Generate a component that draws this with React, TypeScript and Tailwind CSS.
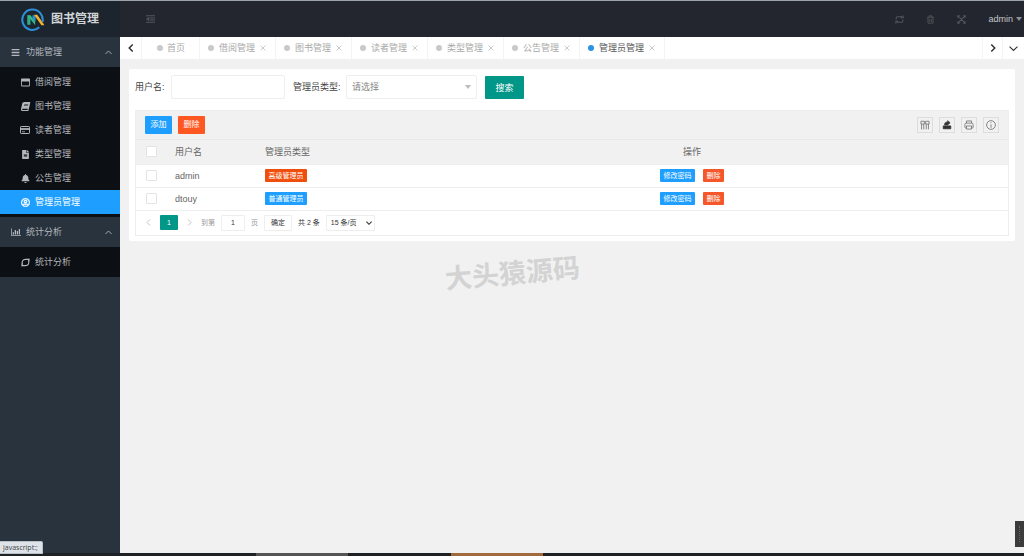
import { FaBars, FaBell, FaBook, FaFileAlt, FaRegUserCircle, FaRegWindowMaximize } from "react-icons/fa";
import type { ReactNode } from "react";

const manageItems: [string, ReactNode][] = [
  ["借阅管理", <FaRegWindowMaximize key="i" />],
  ["图书管理", <FaBook key="i" className="-skew-x-12" />],
  ["读者管理", <CardIcon key="i" />],
  ["类型管理", <FaFileAlt key="i" />],
  ["公告管理", <FaBell key="i" />],
  ["管理员管理", <UserIcon key="i" />],
];

const tabs = ["借阅管理", "图书管理", "读者管理", "类型管理", "公告管理", "管理员管理"];

const rows = [
  { name: "admin", type: "高级管理员", color: "bg-[#f04e0c]" },
  { name: "dtouy", type: "普通管理员", color: "bg-[#1e9fff]" },
];

const current = "管理员管理";

export default function App() {
  return (
    <div className="flex min-h-screen flex-col bg-[#f1f1f1] font-['Liberation_Sans','Noto_Sans_CJK_SC',sans-serif] text-[9px] leading-3 text-[#666]">
      <div className="flex flex-1">
        <Sidebar />
        <div className="flex min-w-0 flex-1 flex-col">
          <TopBar />
          <TabBar />
          <main className="relative flex-1 px-[9px] pt-[10px]">
            <section className="rounded-xs bg-white px-[6px] pt-[6px] pb-[5px]">
              <SearchForm />
              <AdminTable />
            </section>
            <p
              aria-hidden="true"
              className="pointer-events-none absolute top-[199px] left-[36%] -rotate-5 text-[27px] leading-8 font-bold whitespace-nowrap text-[#d3d3d3]"
            >
              大头猿源码
            </p>
          </main>
        </div>
      </div>
      <div className="flex h-[3px] bg-[#1f2224]">
        <span className="w-1/4" />
        <span className="w-[9%] bg-[#555]" />
        <span className="w-[10%]" />
        <span className="w-[9%] bg-[#a06a3c]" />
      </div>
      <div className="fixed bottom-[2px] left-0 rounded-tr-xs border border-l-0 border-[#b9bfc6] bg-[#dee3ea] pr-1 pl-[3px] font-['Open_Sans',sans-serif] text-[7px] leading-[11px] text-[#444]">
        javascript:;
      </div>
      <div className="fixed right-0 bottom-[9px] flex h-[26px] w-[9px] items-center justify-center bg-[#3c3c3c]">
        <span className="h-4 border-l border-dotted border-[#666]" />
      </div>
    </div>
  );
}

function Sidebar() {
  return (
    <aside className="w-[120px] shrink-0 border-t border-[#9aa3ab] bg-[#28333e]">
      <div className="flex h-9 items-center gap-[7px] bg-[#1c242d] pl-[21px] text-[#d2d5d8]">
        <Logo />
        <h1 className="text-[12px] font-bold">图书管理</h1>
      </div>
      <MenuGroup title="功能管理" icon={<FaBars />} items={manageItems} />
      <MenuGroup title="统计分析" icon={<ChartIcon />} items={[["统计分析", <LoopIcon key="i" />]]} />
    </aside>
  );
}

function MenuGroup({ title, icon, items }: { title: string; icon: ReactNode; items: [string, ReactNode][] }) {
  return (
    <nav aria-label={title}>
      <button className="flex h-[30px] w-full items-center bg-[#28333e] pr-2 pl-[11px] text-[#b4b9be]">
        <span className="mr-[6px] flex w-[9px] justify-center">{icon}</span>
        {title}
        <Chevron className="ml-auto h-[7px] w-[7px] rotate-180" />
      </button>
      <ul className="bg-[#0c0f14] py-[3px]">
        {items.map(([label, itemIcon]) => (
          <li key={label}>
            <a
              href="#"
              className={
                label === current
                  ? "flex h-6 items-center bg-[#1e9fff] pl-5 text-white"
                  : "flex h-6 items-center pl-5 text-[#b4b7ba]"
              }
            >
              <span className="mr-[5px] flex w-[10px] justify-center">{itemIcon}</span>
              {label}
            </a>
          </li>
        ))}
      </ul>
    </nav>
  );
}

function TopBar() {
  return (
    <header className="flex h-[37px] items-center border-t border-[#9aa3ab] bg-[#23262e] pr-[2px] pl-[26px] text-[#53565c]">
      <button aria-label="收起菜单">
        <svg viewBox="0 0 18 16" className="h-2 w-[9px]" fill="none" stroke="currentColor" strokeWidth="2">
          <path d="M0 1.500h18M7 6h11M7 10h11M0 14.500h18M5 5L1 8l4 3z" />
        </svg>
      </button>
      <div className="ml-auto flex items-center gap-[22px]">
        <button aria-label="刷新">
          <svg viewBox="0 0 16 16" className="h-[9px] w-[9px]" fill="none" stroke="currentColor" strokeWidth="1.8">
            <path d="M2 8V5.500Q2 3 4.500 3H13M14.500 1v4h-4M14 8v2.500q0 2.500-2.500 2.500H3M1.500 15v-4h4" />
          </svg>
        </button>
        <button aria-label="清理">
          <svg viewBox="0 0 16 16" className="h-[9px] w-[9px]" fill="none" stroke="currentColor" strokeWidth="1.6">
            <path d="M2 4h12M5.500 4V1.500h5V4M3.500 4v10.500h9V4M6.500 7v5M9.500 7v5" />
          </svg>
        </button>
        <button aria-label="全屏">
          <svg viewBox="0 0 16 16" className="h-[9px] w-[9px]" fill="none" stroke="currentColor" strokeWidth="1.8">
            <path d="M1.500 5v-3.500h3.500M11 1.500h3.500V5M14.500 11v3.500H11M5 14.500H1.500V11M2 2l12 12M14 2L2 14" />
          </svg>
        </button>
        <button className="flex items-center gap-[3px] text-[#c4c6c9]">
          admin
          <span className="border-x-[3px] border-t-4 border-x-transparent border-t-[#8d9096]" />
        </button>
      </div>
    </header>
  );
}

function TabBar() {
  return (
    <div className="flex h-[22px] items-stretch bg-white text-[#aaa]">
      <button aria-label="上一个" className="flex w-[22px] items-center justify-center border-r border-[#f4f4f4] text-[#333]">
        <Chevron className="h-2 w-2 rotate-90 stroke-[3px]" />
      </button>
      <a href="#" className="flex items-center gap-1 border-r border-[#f4f4f4] pr-[14px] pl-[15px]">
        <span className="size-[6px] rounded-full bg-[#c9c9c9]" />
        首页
      </a>
      {tabs.map((tab) => (
        <div key={tab} className="flex items-center gap-[5px] border-r border-[#f4f4f4] pr-[9px] pl-[8px]">
          <span className={tab === current ? "size-[6px] rounded-full bg-[#2b93e2]" : "size-[6px] rounded-full bg-[#c9c9c9]"} />
          <a href="#" className={tab === current ? "text-[#555]" : ""}>
            {tab}
          </a>
          <button aria-label={`关闭${tab}`}>
            <svg viewBox="0 0 10 10" className="size-[6px]" fill="none" stroke="#c4c4c4" strokeWidth="1.5">
              <path d="M1 1l8 8M9 1l-8 8" />
            </svg>
          </button>
        </div>
      ))}
      <button aria-label="下一个" className="ml-auto flex w-[21px] items-center justify-center border-x border-[#f4f4f4] text-[#333]">
        <Chevron className="h-2 w-2 -rotate-90 stroke-[3px]" />
      </button>
      <button aria-label="更多" className="flex w-[21px] items-center justify-center text-[#333]">
        <Chevron className="h-[9px] w-[9px]" />
      </button>
    </div>
  );
}

function SearchForm() {
  return (
    <form className="flex h-[35px] items-start text-[#444]" onSubmit={(e) => e.preventDefault()}>
      <label htmlFor="username" className="mr-1 w-8 leading-6">
        用户名:
      </label>
      <input id="username" className="mr-2 h-6 w-[114px] rounded-xs border border-[#eee] px-[5px] outline-none" />
      <label htmlFor="role" className="mr-[5px] w-12 leading-6">
        管理员类型:
      </label>
      <div className="relative mr-2 w-[131px]">
        <select id="role" className="h-6 w-full appearance-none rounded-xs border border-[#eee] bg-white px-[5px] text-[#888]">
          <option>请选择</option>
          <option>高级管理员</option>
          <option>普通管理员</option>
        </select>
        <span className="pointer-events-none absolute top-[10px] right-[6px] border-x-[3px] border-t-4 border-x-transparent border-t-[#bbb]" />
      </div>
      <button className="mt-px h-[23px] w-[39px] rounded-[1px] bg-[#009688] text-white">搜索</button>
    </form>
  );
}

function AdminTable() {
  return (
    <div className="border border-[#eee]">
      <div className="flex h-[29px] items-center gap-[6px] border-b border-[#e8e8e8] bg-[#f1f1f1] px-[9px] text-[8px] text-white">
        <button className="h-[18px] w-[27px] rounded-[1px] bg-[#1e9fff]">添加</button>
        <button className="h-[18px] w-[27px] rounded-[1px] bg-[#ff5722]">删除</button>
        <div className="ml-auto flex gap-[6px] text-[#777]">
          <ToolButton label="筛选列">
            <path d="M1.500 2h5.500v4.500H1.500zM9 2h5.500v4.500H9zM2.500 6.500V15M6 6.500V15M10 6.500V15M13.500 6.500V15" />
          </ToolButton>
          <ToolButton label="导出">
            <path d="M2 9.500h12v4.500H2z" fill="#333" stroke="#333" />
            <path d="M4 8c0-4 2-5 5-5V1l4 3.500L9 8z" fill="#333" stroke="#333" strokeWidth="1" />
          </ToolButton>
          <ToolButton label="打印">
            <path d="M4 5V1.500h8V5M4 13H3Q1.500 13 1.500 11.500V7Q1.500 5 3.500 5h9q2 0 2 2v4.500q0 1.500-1.500 1.500h-1M4 9.500h8v5H4z" />
          </ToolButton>
          <ToolButton label="提示">
            <circle cx="8" cy="8" r="7" />
            <path d="M8 3.500v1.500M8 7v5.500" />
          </ToolButton>
        </div>
      </div>
      <table className="w-full table-fixed border-collapse text-left">
        <thead className="bg-[#f1f1f1]">
          <tr className="h-6 border-b border-[#eee]">
            <th className="w-[30px] pl-[10px]">
              <Check label="全选" />
            </th>
            <th className="w-[90px] px-[9px] font-normal">用户名</th>
            <th className="w-[120px] px-[9px] font-normal">管理员类型</th>
            <th className="px-[9px] text-center font-normal">操作</th>
          </tr>
        </thead>
        <tbody>
          {rows.map((row) => (
            <tr key={row.name} className="h-[23px] border-b border-[#eee]">
              <td className="pl-[10px]">
                <Check label={row.name} />
              </td>
              <td className="px-[9px]">{row.name}</td>
              <td className="px-[9px]">
                <span className={`block w-[42px] rounded-[1px] text-center text-[7px] leading-[13px] text-white ${row.color}`}>
                  {row.type}
                </span>
              </td>
              <td className="px-[9px]">
                <div className="flex justify-center gap-2 text-[7px] leading-[13px] text-white">
                  <button className="w-[35px] rounded-[1px] bg-[#1e9fff]">修改密码</button>
                  <button className="w-[21px] rounded-[1px] bg-[#f5562a]">删除</button>
                </div>
              </td>
            </tr>
          ))}
        </tbody>
      </table>
      <div className="flex h-6 items-center text-[7px] text-[#333]">
        <button aria-label="上一页" className="flex w-6 justify-center text-[#bbb]">
          <Chevron className="size-[7px] rotate-90" />
        </button>
        <button className="h-[15px] w-[18px] rounded-[1px] bg-[#009688] text-white">1</button>
        <button aria-label="下一页" className="flex w-[23px] justify-center text-[#bbb]">
          <Chevron className="size-[7px] -rotate-90" />
        </button>
        <label htmlFor="page" className="mr-[6px] text-[#999]">
          到第
        </label>
        <input id="page" defaultValue="1" className="mr-[6px] h-4 w-6 rounded-[1px] border border-[#eee] text-center" />
        <span className="mr-[6px] text-[#999]">页</span>
        <button className="mr-[6px] h-4 w-7 rounded-[1px] border border-[#eee]">确定</button>
        <span className="mr-[6px]">共 2 条</span>
        <div className="relative">
          <select aria-label="每页条数" className="h-4 w-[49px] appearance-none rounded-[1px] border border-[#eee] bg-white pl-1">
            <option>15 条/页</option>
            <option>30 条/页</option>
          </select>
          <Chevron className="pointer-events-none absolute top-[5px] right-[3px] size-[6px] stroke-[3px]" />
        </div>
      </div>
    </div>
  );
}

function ToolButton({ label, children }: { label: string; children: ReactNode }) {
  return (
    <button aria-label={label} className="flex size-4 items-center justify-center border border-[#ddd]">
      <svg viewBox="0 0 16 16" className="size-[10px]" fill="none" stroke="currentColor" strokeWidth="1.4">
        {children}
      </svg>
    </button>
  );
}

function Check({ label }: { label: string }) {
  return (
    <input
      type="checkbox"
      aria-label={label}
      className="block size-[11px] appearance-none rounded-[1px] border border-[#e4e4e4] bg-white checked:bg-[#009688]"
    />
  );
}

function Chevron({ className }: { className: string }) {
  return (
    <svg viewBox="0 0 16 16" className={className} fill="none" stroke="currentColor" strokeWidth="2">
      <path d="M1 4.500l7 7 7-7" />
    </svg>
  );
}

function CardIcon() {
  return (
    <svg viewBox="0 0 20 16" className="h-2 w-[10px] shrink-0" fill="none" stroke="currentColor" strokeWidth="2">
      <rect x="1" y="1" width="18" height="14" rx="1.500" />
      <path d="M1 6h18" strokeWidth="3.500" />
      <path d="M4 11.500h6" strokeWidth="1.500" />
    </svg>
  );
}

function UserIcon() {
  return <FaRegUserCircle className="size-[9px] stroke-current stroke-[24px]" />;
}

function ChartIcon() {
  return (
    <svg viewBox="0 0 20 16" className="h-2 w-[10px] shrink-0" fill="currentColor">
      <path d="M0 1h1.500v13H20v1.500H0zM3.500 8.500H6V13H3.500zM7.500 4H10v9H7.500zM11.500 6H14v7h-2.500zM15.500 2H18v11h-2.500z" />
    </svg>
  );
}

function LoopIcon() {
  return (
    <svg viewBox="0 0 16 16" className="size-[9px]" fill="none" stroke="currentColor" strokeWidth="2">
      <path d="M3 12C.5 7 3 2.500 8 2.500h6.500M13 4c2.500 5 0 9.500-5 9.500H1.500" />
      <path d="M14.500 1v5M1.500 15v-5" strokeWidth="1.500" />
    </svg>
  );
}

function Logo() {
  return (
    <svg viewBox="0 0 44 44" className="size-[23px]" fill="none">
      <path d="M35 37A19.500 19.500 0 1 1 41 27" stroke="#2b8ed8" strokeWidth="4" />
      <path d="M12 14l6 1v17h-6z" fill="#2fb08b" />
      <path d="M12 14h6l9 11v8z" fill="#35b58a" />
      <path d="M22 14h6v12l-6-7z" fill="#2b8ed8" />
      <path d="M25 13h6l14 20h-6z" fill="#f3b229" />
    </svg>
  );
}
